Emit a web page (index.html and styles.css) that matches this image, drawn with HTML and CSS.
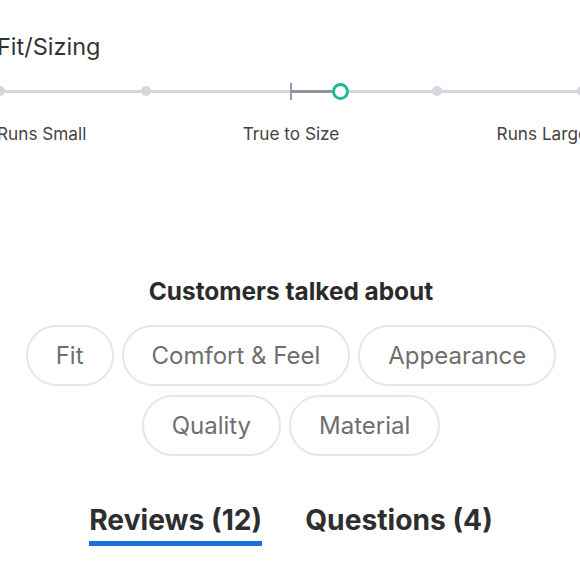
FILE: index.html
```html
<!DOCTYPE html>
<html lang="en">
<head>
<meta charset="utf-8">
<title>Fit/Sizing</title>
<link rel="stylesheet" href="styles.css">
</head>
<body>
<div class="page">
  <section class="fit">
    <h2 class="fit-title">Fit/Sizing</h2>
    <div class="track">
      <span class="dot"></span>
      <span class="dot"></span>
      <span class="dot dot-hidden"></span>
      <span class="dot"></span>
      <span class="dot"></span>
      <div class="marker">
        <span class="tick"></span>
        <span class="seg"></span>
        <span class="ring"></span>
      </div>
    </div>
    <div class="fit-labels">
      <span class="lbl lbl-left">Runs Small</span>
      <span class="lbl lbl-mid">True to Size</span>
      <span class="lbl lbl-right">Runs Large</span>
    </div>
  </section>

  <section class="talked">
    <h3 class="talked-title">Customers talked about</h3>
    <div class="chips">
      <span class="chip">Fit</span>
      <span class="chip">Comfort &amp; Feel</span>
      <span class="chip">Appearance</span>
      <span class="chip">Quality</span>
      <span class="chip">Material</span>
    </div>
  </section>

  <nav class="tabs">
    <span class="tab tab-active">Reviews (12)</span>
    <span class="tab">Questions (4)</span>
  </nav>
</div>
</body>
</html>
```

FILE: styles.css
```css
html, body {
  margin: 0;
  padding: 0;
  background: #ffffff;
  overflow: hidden;
}

body {
  font-family: Inter, "Noto Sans", "Liberation Sans", sans-serif;
  color: #2e2e2e;
  width: 580px;
  height: 580px;
}

.page {
  width: 588px;
  margin-left: -3px;
  padding-top: 33px;
}

.fit-title {
  margin: 0;
  font-size: 23.5px;
  line-height: 28px;
  font-weight: 400;
  color: #333333;
}

.track {
  position: relative;
  display: flex;
  justify-content: space-between;
  align-items: center;
  height: 18px;
  margin: 21px -2px 0 -2px;
}

.track::before {
  content: "";
  position: absolute;
  left: 5px;
  right: 5px;
  top: 8px;
  height: 3px;
  background: #d6d6de;
}

.dot {
  position: relative;
  width: 10px;
  height: 10px;
  border-radius: 50%;
  background: #d6d6de;
}

.dot-hidden {
  visibility: hidden;
}

.marker {
  position: absolute;
  left: 295px;
  top: 0;
  height: 18px;
  display: flex;
  align-items: center;
}

.tick {
  width: 2px;
  height: 17px;
  background: #9a9aa6;
}

.seg {
  width: 40px;
  height: 3px;
  background: #9494a0;
}

.ring {
  box-sizing: border-box;
  width: 17px;
  height: 17px;
  border: 3px solid #1fb99a;
  border-radius: 50%;
  background: #ffffff;
}

.fit-labels {
  display: grid;
  grid-template-columns: 1fr auto 1fr;
  margin-top: 23px;
  font-size: 17.2px;
  line-height: 22px;
  color: #444444;
}

.lbl-left { text-align: left; }
.lbl-mid { text-align: center; }
.lbl-right { text-align: right; margin-right: -3px; }

.talked {
  margin-top: 131px;
  display: flex;
  flex-direction: column;
  align-items: center;
}

.talked-title {
  margin: 0;
  font-size: 24.4px;
  line-height: 30px;
  font-weight: 700;
  color: #2b2b2b;
}

.chips {
  margin-top: 19px;
  width: 570px;
  display: flex;
  flex-wrap: wrap;
  justify-content: center;
  gap: 9px 8px;
}

.chip {
  box-sizing: border-box;
  height: 61px;
  padding: 0 28px;
  display: flex;
  align-items: center;
  border: 2px solid #e6e6e6;
  border-radius: 31px;
  font-size: 24px;
  color: #6f6f6f;
}

.tabs {
  margin-top: 47px;
  display: flex;
  justify-content: center;
  gap: 43px;
}

.tab {
  font-size: 28.2px;
  line-height: 34px;
  font-weight: 700;
  color: #2e2e2e;
  padding-bottom: 4px;
  border-bottom: 5px solid transparent;
}

.tab-active {
  border-bottom-color: #1a73dc;
}
```
